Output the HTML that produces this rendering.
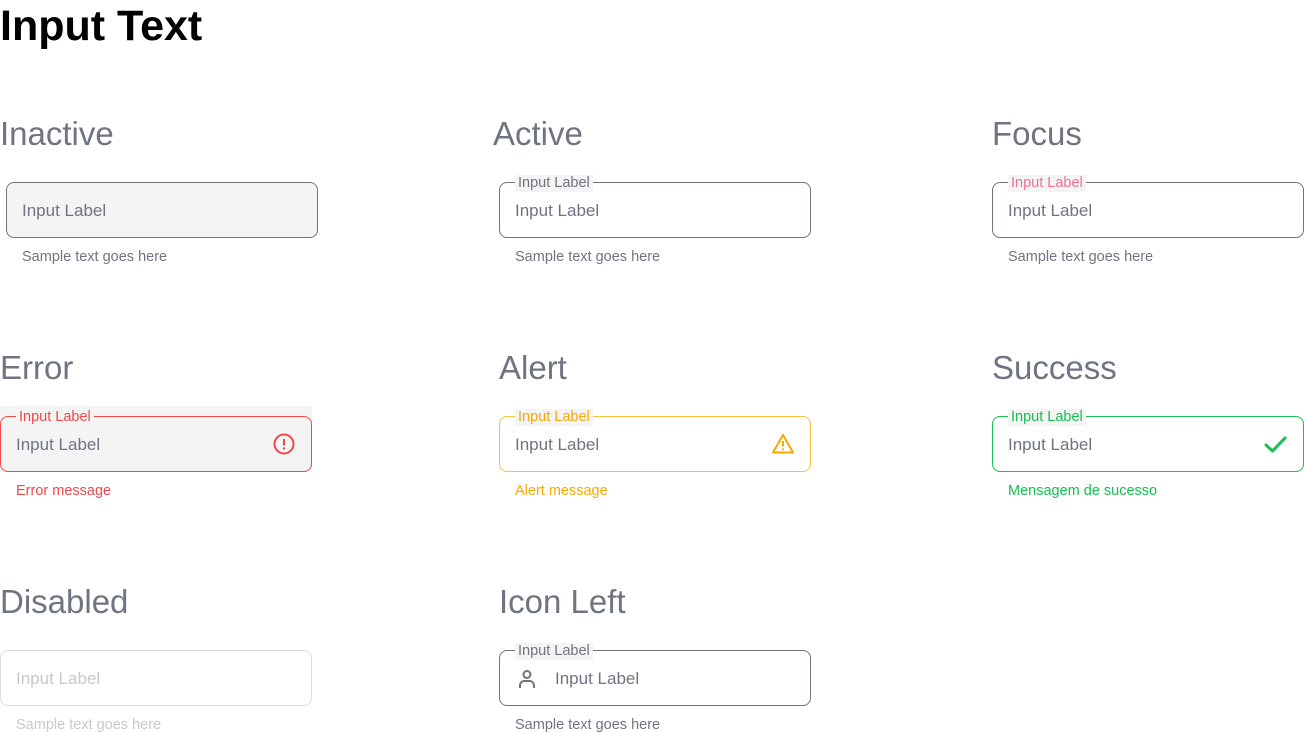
<!DOCTYPE html><html><head><style>
body{margin:0;width:1304px;height:733px;background:#fff;font-family:"Liberation Sans",sans-serif;position:relative;overflow:hidden}
.a{position:absolute;white-space:nowrap}
h1{position:absolute;left:0;top:0;margin:0;font-size:43px;line-height:52px;font-weight:bold;color:#000}
.h{position:absolute;font-size:33px;color:#6f7480;line-height:36px}
.box{position:absolute;width:310px;height:54px;border:1px solid #6f7480;border-radius:8px;box-sizing:content-box}
.box .t{position:absolute;left:15px;top:1px;line-height:54px;font-size:17px;color:#6f7480}
.lab{position:absolute;top:-8px;left:15px;padding:0 3px;font-size:14.5px;line-height:17px;background:#f4f4f4;color:#6f7480}
.help{position:absolute;font-size:14.5px;color:#6f7480;top:0}
</style></head><body>
<h1>Input Text</h1>
<div class="h" style="left:0;top:116px">Inactive</div>
<div class="h" style="left:493px;top:116px">Active</div>
<div class="h" style="left:992px;top:116px">Focus</div>
<div class="h" style="left:0;top:350px">Error</div>
<div class="h" style="left:499px;top:350px">Alert</div>
<div class="h" style="left:992px;top:350px">Success</div>
<div class="h" style="left:0;top:584px">Disabled</div>
<div class="h" style="left:499px;top:584px">Icon Left</div>

<div class="box" style="left:6px;top:182px;background:#f4f4f4"><span class="t">Input Label</span></div>
<div class="help" style="left:22px;top:249px">Sample text goes here</div>

<div class="box" style="left:499px;top:182px"><span class="lab">Input Label</span><span class="t">Input Label</span></div>
<div class="help" style="left:515px;top:249px">Sample text goes here</div>

<div class="box" style="left:992px;top:182px"><span class="lab" style="color:#f0709a">Input Label</span><span class="t">Input Label</span></div>
<div class="help" style="left:1008px;top:249px">Sample text goes here</div>

<div class="a" style="left:0;top:406px;width:312px;height:66px;background:#f4f4f4"></div>
<div class="box" style="left:0;top:416px;border-color:#f04848;background:#f4f4f4"><span class="lab" style="color:#f04848">Input Label</span><span class="t">Input Label</span>
<svg class="a" style="left:272px;top:16px" width="22" height="22" viewBox="0 0 22 22"><circle cx="11" cy="11" r="9.5" fill="none" stroke="#f04848" stroke-width="2"/><line x1="11" y1="6" x2="11" y2="12.5" stroke="#f04848" stroke-width="2"/><circle cx="11" cy="15.5" r="1.2" fill="#f04848"/></svg></div>
<div class="help" style="left:16px;top:483px;color:#f04848">Error message</div>

<div class="box" style="left:499px;top:416px;border-color:#fbbf40"><span class="lab" style="color:#f8a800">Input Label</span><span class="t">Input Label</span>
<svg class="a" style="left:271px;top:16px" width="24" height="22" viewBox="0 0 24 22"><path d="M12 2 L22 19.5 H2 Z" fill="none" stroke="#f8a800" stroke-width="2" stroke-linejoin="round"/><line x1="12" y1="8" x2="12" y2="13.5" stroke="#f8a800" stroke-width="2"/><circle cx="12" cy="16.3" r="1.1" fill="#f8a800"/></svg></div>
<div class="help" style="left:515px;top:483px;color:#f8a800">Alert message</div>

<div class="box" style="left:992px;top:416px;border-color:#14c050"><span class="lab" style="color:#14c050">Input Label</span><span class="t">Input Label</span>
<svg class="a" style="left:271px;top:16px" width="24" height="22" viewBox="0 0 24 22"><path d="M2 12 L8.5 18 L21 5" fill="none" stroke="#14c050" stroke-width="3" stroke-linecap="round" stroke-linejoin="round"/></svg></div>
<div class="help" style="left:1008px;top:483px;color:#14c050">Mensagem de sucesso</div>

<div class="box" style="left:0;top:650px;border-color:#dcdcdc"><span class="t" style="color:#c8c8c8">Input Label</span></div>
<div class="help" style="left:16px;top:717px;color:#c8c8c8">Sample text goes here</div>

<div class="box" style="left:499px;top:650px"><span class="lab">Input Label</span>
<svg class="a" style="left:16px;top:17px" width="22" height="22" viewBox="0 0 22 22"><circle cx="11" cy="6.5" r="3.5" fill="none" stroke="#6f7480" stroke-width="2"/><path d="M4 20 V17.5 A4.5 4.5 0 0 1 8.5 13 H13.5 A4.5 4.5 0 0 1 18 17.5 V20" fill="none" stroke="#6f7480" stroke-width="2"/></svg>
<span class="t" style="left:55px">Input Label</span></div>
<div class="help" style="left:515px;top:717px">Sample text goes here</div>
</body></html>
